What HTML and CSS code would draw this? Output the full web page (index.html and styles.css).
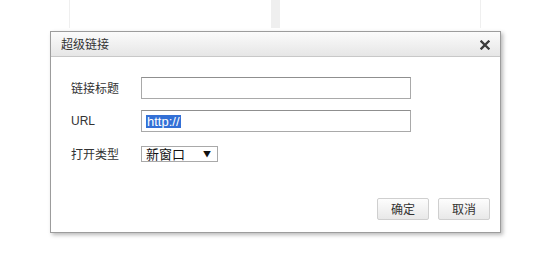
FILE: index.html
```html
<!DOCTYPE html>
<html lang="zh">
<head>
<meta charset="utf-8">
<link rel="stylesheet" href="styles.css">
</head>
<body>
<div class="page">
  <div class="panel panel-left"></div>
  <div class="divider"></div>
  <div class="panel panel-right"></div>
</div>
<div class="dialog">
  <div class="titlebar">
    <span class="title">超级链接</span>
    <svg class="close" width="10" height="10" viewBox="0 0 10 10"><path d="M1.5 1.5 L8.5 8.5 M8.5 1.5 L1.5 8.5" stroke="#3a3a3a" stroke-width="2.3" stroke-linecap="square"/></svg>
  </div>
  <div class="body">
    <div class="row">
      <label class="label">链接标题</label>
      <div class="field"></div>
    </div>
    <div class="row row-url">
      <label class="label">URL</label>
      <div class="field"><span class="sel">http://</span></div>
    </div>
    <div class="row row-type">
      <label class="label">打开类型</label>
      <div class="select"><span class="opt">新窗口</span><span class="arrow">▼</span></div>
    </div>
  </div>
  <div class="footer">
    <button class="btn">确定</button>
    <button class="btn">取消</button>
  </div>
</div>
</body>
</html>
```
FILE: styles.css
```css
html, body {
  margin: 0;
  padding: 0;
  background: #fff;
}
body {
  width: 556px;
  height: 260px;
  position: relative;
  overflow: hidden;
  font-family: "Noto Sans CJK SC", "Liberation Sans", sans-serif;
}
.page {
  display: flex;
  margin-left: 69px;
  width: 412px;
  height: 28px;
}
.panel {
  flex: 1;
  height: 28px;
}
.panel-left {
  border-left: 1px solid #efefef;
}
.panel-right {
  border-right: 1px solid #efefef;
}
.divider {
  width: 9px;
  background: #efefef;
}
.dialog {
  position: absolute;
  left: 50px;
  top: 31px;
  width: 449px;
  height: 200px;
  border: 1px solid #9c9c9c;
  background: #fff;
  box-shadow: 2px 2px 4px rgba(0, 0, 0, 0.28);
  display: flex;
  flex-direction: column;
}
.titlebar {
  height: 24px;
  border-bottom: 1px solid #c8c8c8;
  background: linear-gradient(#fbfbfb, #e6e6e6);
  display: flex;
  align-items: center;
  justify-content: space-between;
  padding: 0 10px 0 10px;
}
.title {
  font-size: 12px;
  color: #333;
  line-height: 14px;
}
.close {
  display: block;
  margin-top: 1px;
}
.body {
  flex: 1;
  padding: 20px 0 0 20px;
}
.row {
  display: flex;
  align-items: center;
}
.row-url {
  margin-top: 11px;
}
.row-type {
  margin-top: 14px;
}
.label {
  width: 70px;
  font-size: 12px;
  color: #333;
  line-height: 14px;
}
.row-url .label {
  font-family: "Liberation Sans", sans-serif;
  font-size: 12px;
}
.field {
  width: 264px;
  height: 20px;
  border: 1px solid #a9a9a9;
  border-top-color: #8f8f8f;
  display: flex;
  align-items: center;
  padding-left: 4px;
}
.sel {
  font-family: "Liberation Sans", sans-serif;
  font-size: 13px;
  line-height: 13px;
  background: #3370d6;
  color: #fff;
  padding: 0 1px;
}
.select {
  width: 75px;
  height: 14px;
  border: 1px solid #a9a9a9;
  display: flex;
  align-items: center;
  justify-content: space-between;
}
.opt {
  font-size: 13px;
  line-height: 14px;
  color: #111;
  padding-left: 4px;
}
.arrow {
  font-size: 8px;
  color: #111;
  padding-right: 6px;
  line-height: 10px;
}
.footer {
  display: flex;
  justify-content: flex-end;
  gap: 9px;
  padding: 0 10px 12px 0;
}
.btn {
  width: 52px;
  height: 22px;
  margin: 0;
  padding: 0;
  border: 1px solid #cfcfcf;
  border-radius: 2px;
  background: linear-gradient(#fdfdfd, #e8e8e8);
  font-family: "Noto Sans CJK SC", sans-serif;
  font-size: 12px;
  color: #333;
  line-height: 14px;
}
```
